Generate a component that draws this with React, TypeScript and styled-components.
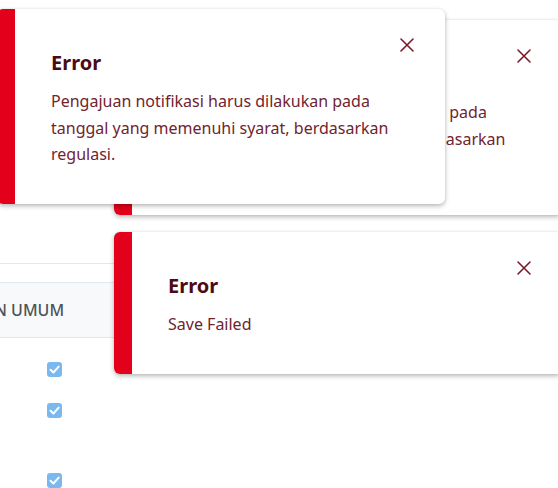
import styled, { createGlobalStyle } from 'styled-components';

const GlobalStyle = createGlobalStyle`
  html, body {
    margin: 0;
    padding: 0;
    background: #ffffff;
  }
  body {
    font-family: "Noto Sans", "Open Sans", Arial, sans-serif;
    overflow: hidden;
  }
`;

const Page = styled.div`
  position: relative;
  width: 558px;
  height: 488px;
  overflow: hidden;
  background: #ffffff;
`;

const Table = styled.div`
  display: flex;
  flex-direction: column;
  margin-top: 263px;
  margin-left: -105px;
  width: 700px;
  border-top: 1px solid #e3e6ea;
`;

const TopRow = styled.div`
  height: 18px;
`;

const HeaderRow = styled.div`
  display: flex;
  align-items: center;
  height: 54px;
  background: #f8f9fa;
  border-top: 1px solid #e3e6ea;
  border-bottom: 1px solid #e3e6ea;
`;

const HeaderCell = styled.div`
  white-space: nowrap;
  font-size: 16px;
  font-weight: 500;
  color: #4d5358;
`;

const Body = styled.div`
  display: flex;
  flex-direction: column;
  padding-top: 24px;
`;

const Row = styled.div<{ $h: number }>`
  display: flex;
  height: ${(p) => p.$h}px;
`;

const CheckCell = styled.div`
  width: 167px;
  display: flex;
  justify-content: flex-end;
`;

const CheckBox = styled.span`
  display: inline-flex;
  align-items: center;
  justify-content: center;
  width: 15px;
  height: 15px;
  border-radius: 3px;
  background: #7ab9ef;
`;

const Toast = styled.div<{ $x: number; $y: number }>`
  position: absolute;
  left: ${(p) => p.$x}px;
  top: ${(p) => p.$y}px;
  width: 448px;
  display: flex;
  background: #ffffff;
  border-radius: 6px;
  box-shadow: 0 2px 5px rgba(0, 0, 0, 0.28), 0 0 2px rgba(0, 0, 0, 0.08);
  overflow: hidden;
`;

const Stripe = styled.div`
  width: 18px;
  flex-shrink: 0;
  background: #e2001a;
`;

const Content = styled.div`
  flex: 1;
  padding: 36px 34px 36px 36px;
`;

const Title = styled.div`
  margin-top: 4px;
  font-size: 20px;
  line-height: 28px;
  font-weight: 700;
  color: #4c0b14;
`;

const Message = styled.div`
  margin-top: 11px;
  font-size: 16px;
  line-height: 26.5px;
  color: #70242f;
`;

const CloseButton = styled.button`
  position: absolute;
  top: 28px;
  right: 30px;
  width: 16px;
  height: 16px;
  padding: 0;
  border: none;
  background: transparent;
  display: flex;
  align-items: center;
  justify-content: center;
  cursor: pointer;
`;

const CloseIcon = () => (
  <svg width="14" height="14" viewBox="0 0 14 14">
    <path d="M1 1 L13 13 M13 1 L1 13" stroke="#7d1a2a" strokeWidth="1.6" strokeLinecap="round" />
  </svg>
);

const CheckIcon = () => (
  <svg width="11" height="11" viewBox="0 0 10 10">
    <path d="M1.4 5.2 L4 7.7 L8.8 2.4" fill="none" stroke="#ffffff" strokeWidth="1.8" strokeLinecap="round" strokeLinejoin="round" />
  </svg>
);

interface ErrorToastProps {
  x: number;
  y: number;
  message: string;
}

const ErrorToast = ({ x, y, message }: ErrorToastProps) => (
  <Toast $x={x} $y={y}>
    <Stripe />
    <Content>
      <Title>Error</Title>
      <Message>{message}</Message>
    </Content>
    <CloseButton aria-label="Close">
      <CloseIcon />
    </CloseButton>
  </Toast>
);

const longMessage =
  'Pengajuan notifikasi harus dilakukan pada tanggal yang memenuhi syarat, berdasarkan regulasi.';

export default function App() {
  return (
    <Page>
      <GlobalStyle />
      <Table>
        <TopRow />
        <HeaderRow>
          <HeaderCell>PENGGUNAAN UMUM</HeaderCell>
        </HeaderRow>
        <Body>
          {[41, 70, 40].map((h, i) => (
            <Row key={i} $h={h}>
              <CheckCell>
                <CheckBox>
                  <CheckIcon />
                </CheckBox>
              </CheckCell>
            </Row>
          ))}
        </Body>
      </Table>
      <ErrorToast x={114} y={20} message={longMessage} />
      <ErrorToast x={-3} y={9} message={longMessage} />
      <ErrorToast x={114} y={232} message="Save Failed" />
    </Page>
  );
}
